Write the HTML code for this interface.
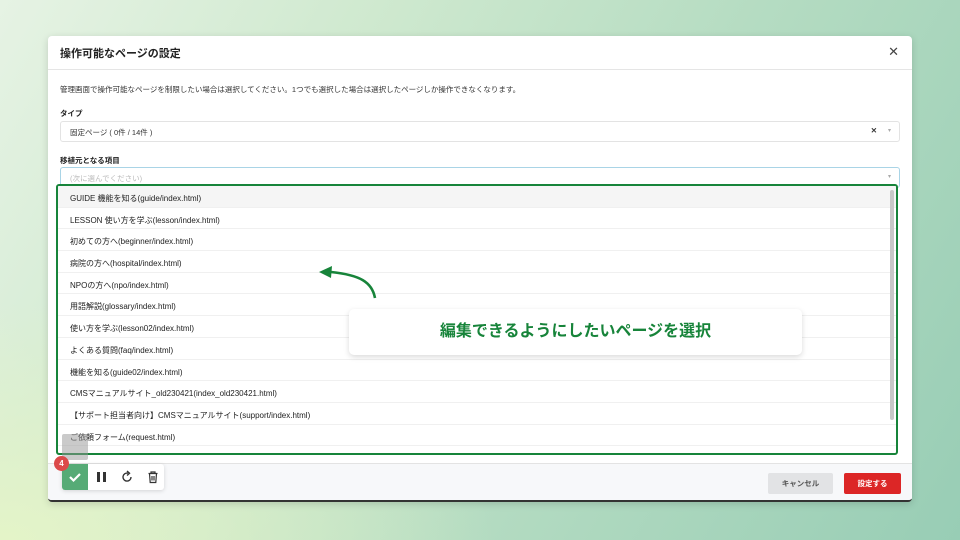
<!DOCTYPE html>
<html><head><meta charset="utf-8"><style>
*{margin:0;padding:0;box-sizing:border-box}
body{width:960px;height:540px;overflow:hidden;font-family:"Liberation Sans","Noto Sans CJK JP",sans-serif;background:linear-gradient(120deg,#e6f3e4 0%,#cfe9cf 30%,#b5dcc2 60%,#98cdb5 100%);position:relative}
.bg2{position:absolute;left:0;top:300px;width:500px;height:240px;background:radial-gradient(ellipse at 0% 100%,#e4f4c8 0%,rgba(228,244,200,0) 70%)}
.modal{position:absolute;left:48px;top:36px;width:864px;height:466px;background:#fff;border-radius:4px;box-shadow:0 2px 8px rgba(0,0,0,.15);border-bottom:2px solid #333;overflow:hidden}
.hd{height:34px;border-bottom:1px solid #e5e5e5;padding:9px 12px;font-size:11px;font-weight:bold;color:#222}
.x{position:absolute;right:13px;top:8px;font-size:13px;color:#444}
.t{position:absolute;font-size:7.5px;color:#333}
.lab{position:absolute;font-size:7.5px;font-weight:bold;color:#222}
.sel{position:absolute;left:12px;width:840px;height:21px;border:1px solid #e3e3e3;border-radius:3px;font-size:7.5px;padding:5px 9px;color:#333}
.list{position:absolute;left:8px;top:148px;width:842px;height:271px;border:2.5px solid #17843a;border-radius:3px;overflow:hidden}
.row{height:21.7px;border-bottom:1px solid #f0f0f0;font-size:8px;padding:7px 12px 0;color:#222;white-space:nowrap}
.ft{position:absolute;left:0;top:427px;width:864px;height:39px;background:#f7f8fa;border-top:1px solid #e3e3e3}
.btn{position:absolute;top:9px;height:21px;border-radius:2px;font-size:7.5px;text-align:center;line-height:21px;font-weight:bold}
</style></head><body>
<div class="bg2"></div>
<div class="modal">
<div class="hd">操作可能なページの設定</div><div class="x">✕</div>
<div class="t" style="left:12px;top:48px">管理画面で操作可能なページを制限したい場合は選択してください。1つでも選択した場合は選択したページしか操作できなくなります。</div>
<div class="lab" style="left:12px;top:72px">タイプ</div>
<div class="sel" style="top:85px">固定ページ ( 0件 / 14件 )<span style="position:absolute;right:22px;top:4px;font-weight:bold">✕</span><span style="position:absolute;right:8px;top:5px;color:#aaa;font-size:6px">▾</span></div>
<div class="lab" style="left:12px;top:119px">移植元となる項目</div>
<div class="sel" style="top:131px;border-color:#a9d4e6;color:#bbb">(次に選んでください)<span style="position:absolute;right:8px;top:5px;color:#aaa;font-size:6px">▾</span></div>
<div class="list">
<div class="row" style="background:#f5f5f5">GUIDE 機能を知る(guide/index.html)</div>
<div class="row">LESSON 使い方を学ぶ(lesson/index.html)</div>
<div class="row">初めての方へ(beginner/index.html)</div>
<div class="row">病院の方へ(hospital/index.html)</div>
<div class="row">NPOの方へ(npo/index.html)</div>
<div class="row">用語解説(glossary/index.html)</div>
<div class="row">使い方を学ぶ(lesson02/index.html)</div>
<div class="row">よくある質問(faq/index.html)</div>
<div class="row">機能を知る(guide02/index.html)</div>
<div class="row">CMSマニュアルサイト_old230421(index_old230421.html)</div>
<div class="row">【サポート担当者向け】CMSマニュアルサイト(support/index.html)</div>
<div class="row">ご依頼フォーム(request.html)</div>
<div style="position:absolute;right:2px;top:4px;width:4px;height:230px;background:#c8c8c8;border-radius:2px"></div>
</div>
<div class="ft">
<div class="btn" style="left:720px;width:65px;background:#e2e3e5;color:#555">キャンセル</div>
<div class="btn" style="left:796px;width:57px;background:#dc2626;color:#fff">設定する</div>
</div>
</div>
<div style="position:absolute;left:62px;top:434px;width:26px;height:26px;background:rgba(150,150,150,.5);border-radius:2px"></div>
<div style="position:absolute;left:62px;top:464px;width:102px;height:26px;background:#fff;border-radius:3px;box-shadow:0 1px 4px rgba(0,0,0,.15)">
<div style="position:absolute;left:0;top:0;width:26px;height:26px;background:#56ab76;border-radius:3px 0 0 3px"><svg width="26" height="26" viewBox="0 0 26 26"><path d="M8 13L11.5 16.5L18 10" fill="none" stroke="#fff" stroke-width="2.2"/></svg></div>
<div style="position:absolute;left:35px;top:8px;width:3px;height:10px;background:#333"></div><div style="position:absolute;left:41px;top:8px;width:3px;height:10px;background:#333"></div>
<svg style="position:absolute;left:58px;top:6px" width="14" height="14" viewBox="0 0 14 14"><path d="M11 7A4 4 0 1 1 8 3.2" fill="none" stroke="#333" stroke-width="1.4"/><path d="M7 1L9.5 3.3L7 5.5" fill="none" stroke="#333" stroke-width="1.4"/></svg>
<svg style="position:absolute;left:84px;top:6px" width="14" height="14" viewBox="0 0 14 14"><path d="M2.5 3.5H11.5M5 3.5V2H9V3.5M3.5 3.5L4.2 12.5H9.8L10.5 3.5M6 6V10.5M8 6V10.5" fill="none" stroke="#333" stroke-width="1.2"/></svg>
</div>
<div style="position:absolute;left:54px;top:456px;width:15px;height:15px;border-radius:50%;background:#dc4a4a;color:#fff;font-size:8px;font-weight:bold;text-align:center;line-height:15px">4</div>
<svg style="position:absolute;left:315px;top:262px" width="70" height="40" viewBox="0 0 70 40"><path d="M60 36C57 20 45 13 16 10" fill="none" stroke="#17843a" stroke-width="2.6"/><path d="M4 10L17 4L16 16Z" fill="#17843a"/></svg>
<div style="position:absolute;left:349px;top:309px;width:453px;height:46px;background:#fff;border-radius:5px;box-shadow:0 2px 6px rgba(0,0,0,.15);text-align:center;line-height:46px;font-size:16px;font-weight:bold;color:#17843a">編集できるようにしたいページを選択</div>
</body></html>
